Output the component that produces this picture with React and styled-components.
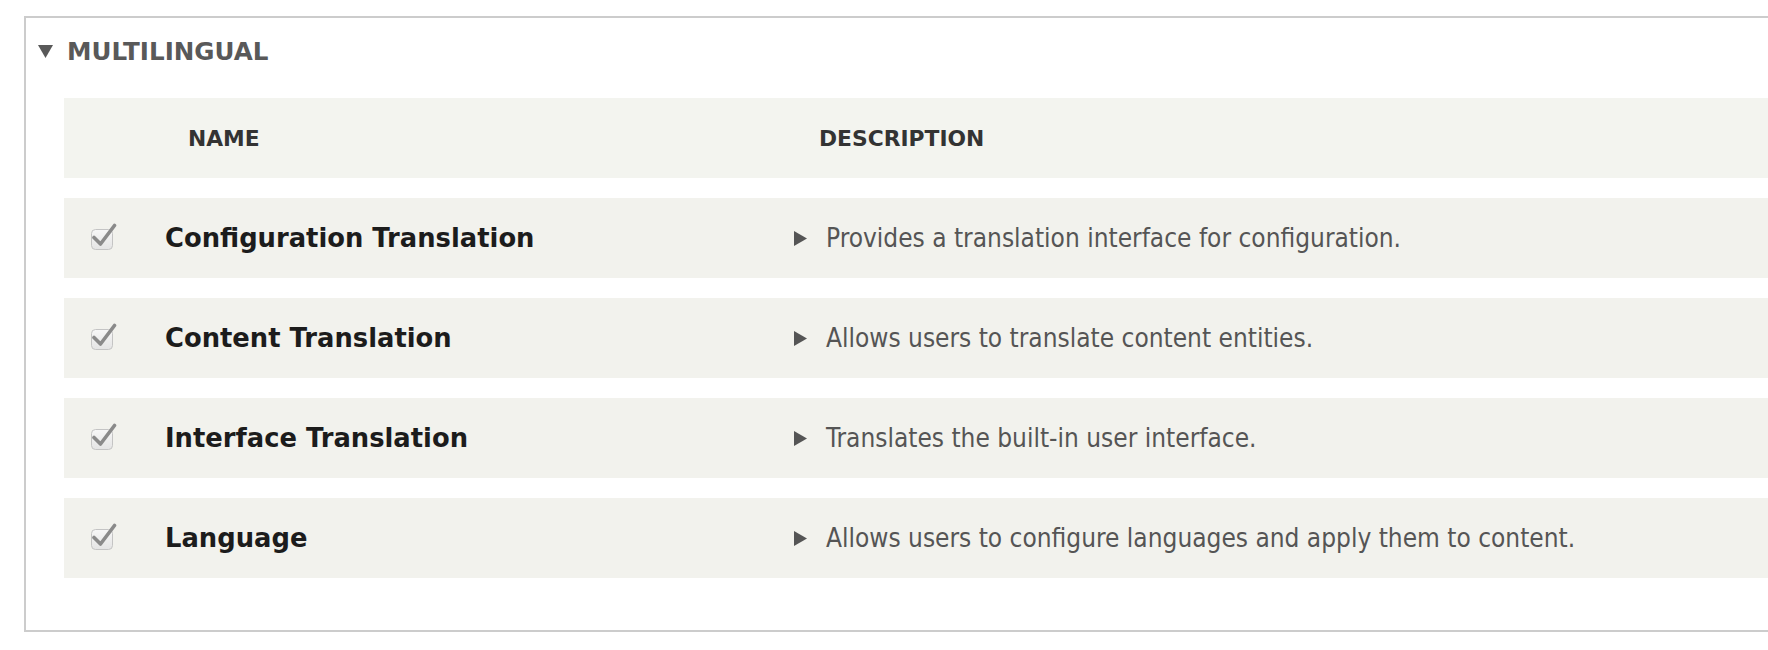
import React from 'react'
import styled, { createGlobalStyle } from 'styled-components'

const GlobalStyle = createGlobalStyle`
body {
    margin: 0;
    background: #fff;
    overflow: hidden;
    font-family: "DejaVu Sans", "Liberation Sans", sans-serif;
}
`

const Page = styled.div`
padding: 16px 0 0 24px;
`

const Details = styled.div`
border: 2px solid #ccc;
margin-right: -60px;
padding: 0 0 52px 38px;
`

const Summary = styled.div`
display: flex;
align-items: center;
height: 66px;
margin-left: -26px;
gap: 14px;
color: #595959;
font-weight: bold;
font-size: 24.6px;
text-transform: uppercase;
`

const Table = styled.div`
display: flex;
flex-direction: column;
gap: 20px;
margin-top: 14px;
`

const Row = styled.div`
display: grid;
grid-template-columns: 101px 629px 1fr;
align-items: center;
height: 80px;
background: ${props => props.head ? '#f3f4ef' : '#f2f2ed'};
`

const HeadCell = styled.div`
font-weight: bold;
font-size: 21.8px;
color: #333;
padding-left: ${props => props.pad}px;
`

const CheckCell = styled.div`
display: flex;
padding-left: 26px;
padding-bottom: 2px;
`

const Name = styled.div`
font-weight: bold;
font-size: 25.8px;
color: #1c1c1c;
`

const Desc = styled.div`
display: flex;
align-items: center;
gap: 19px;
font-family: "DejaVu Sans Condensed", "DejaVu Sans", sans-serif;
font-stretch: condensed;
font-size: 26px;
color: #555;
`

const modules = [
    { name: 'Configuration Translation', desc: 'Provides a translation interface for configuration.' },
    { name: 'Content Translation', desc: 'Allows users to translate content entities.' },
    { name: 'Interface Translation', desc: 'Translates the built-in user interface.' },
    { name: 'Language', desc: 'Allows users to configure languages and apply them to content.' },
]

const Checkbox = () => (
    <svg width="27" height="28" viewBox="0 0 27 28">
        <defs>
            <linearGradient id="cbg" x1="0" y1="0" x2="0" y2="1">
                <stop offset="0" stopColor="#f7f7f7" />
                <stop offset="1" stopColor="#e4e4e4" />
            </linearGradient>
        </defs>
        <rect x="1.5" y="6.5" width="21" height="20" rx="4" fill="url(#cbg)" stroke="#c4c4c4" />
        <path d="M4 14.5 L10.5 21 L24.5 2.5" fill="none" stroke="#8a8a8a" strokeWidth="3.6" strokeLinejoin="round" strokeLinecap="round" />
    </svg>
)

const DownArrow = () => (
    <svg width="15" height="13" viewBox="0 0 15 13">
        <path d="M0 0 H15 L7.5 13 Z" fill="#595959" />
    </svg>
)

const RightArrow = () => (
    <svg width="13" height="15" viewBox="0 0 13 15">
        <path d="M0 0 L13 7.5 L0 15 Z" fill="#555" />
    </svg>
)

const App = () => {
    return (
        <Page>
            <GlobalStyle />
            <Details>
                <Summary>
                    <DownArrow />
                    Multilingual
                </Summary>
                <Table>
                    <Row head>
                        <HeadCell />
                        <HeadCell pad={23}>NAME</HeadCell>
                        <HeadCell pad={25}>DESCRIPTION</HeadCell>
                    </Row>
                    {modules.map((m) => (
                        <Row key={m.name}>
                            <CheckCell><Checkbox /></CheckCell>
                            <Name>{m.name}</Name>
                            <Desc><RightArrow />{m.desc}</Desc>
                        </Row>
                    ))}
                </Table>
            </Details>
        </Page>
    )
}

export default App
